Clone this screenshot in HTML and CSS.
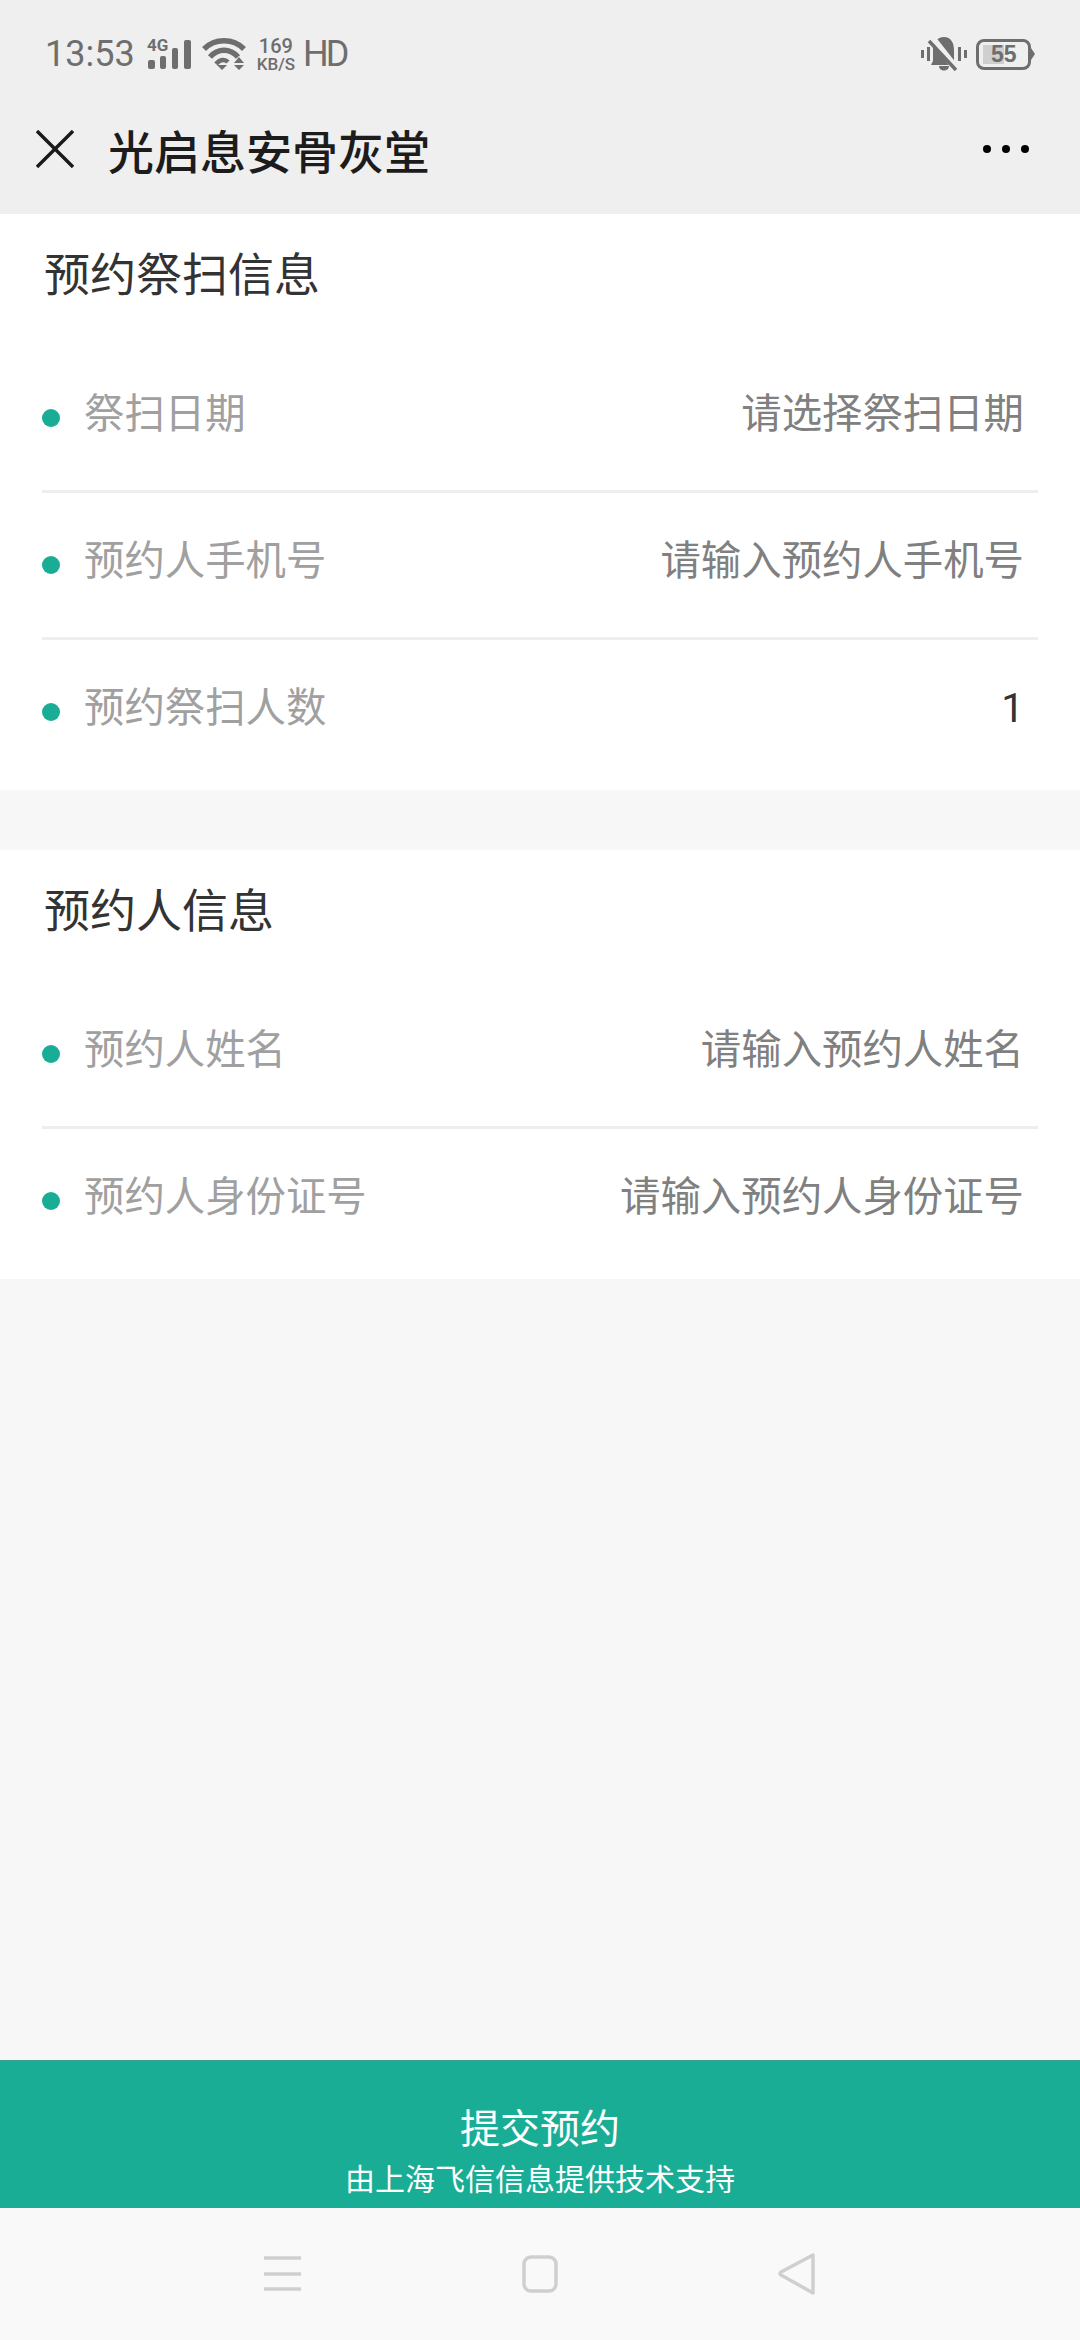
FILE: index.html
```html
<!DOCTYPE html>
<html lang="zh-CN">
<head>
    <meta charset="UTF-8">
    <meta name="viewport" content="width=device-width, initial-scale=1.0">
    <title>光启息安骨灰堂</title>
    <link rel="stylesheet" href="styles.css">
</head>
<body>
    <div class="page">
        <header class="top">
            <div class="status-bar">
                <div class="status-left">
                    <span class="clock">13:53</span>
                    <svg class="signal" width="44" height="30" viewBox="0 0 44 30">
                        <text x="0" y="12" class="signal-text">4G</text>
                        <rect x="1" y="21" width="7" height="9" rx="2"/>
                        <rect x="13" y="17" width="6" height="13" rx="2"/>
                        <rect x="25" y="9" width="6" height="21" rx="2"/>
                        <rect x="37" y="1" width="7" height="29" rx="2"/>
                    </svg>
                    <svg class="wifi" width="44" height="32" viewBox="0 0 44 32">
                        <path d="M2 11 C13 0 31 0 42 11" fill="none" stroke="#6e6e6e" stroke-width="5.5"/>
                        <path d="M8 19 C16 10 28 10 36 19" fill="none" stroke="#6e6e6e" stroke-width="5.5"/>
                        <path d="M14 26 C18 21 23 21 26 24" fill="none" stroke="#6e6e6e" stroke-width="4.5"/>
                        <path d="M15 27 H25 L20 32 Z M32 25 L37 19 L42 25 Z M32 27 H42 L37 32 Z" fill="#6e6e6e"/>
                    </svg>
                    <div class="speed"><span>169</span><span>KB/S</span></div>
                    <span class="hd">HD</span>
                </div>
                <div class="status-right">
                    <svg width="46" height="34" viewBox="0 0 46 34">
                        <rect x="0" y="13" width="3" height="8" fill="#6e6e6e"/>
                        <rect x="6" y="10" width="3" height="14" fill="#6e6e6e"/>
                        <rect x="37" y="10" width="3" height="14" fill="#6e6e6e"/>
                        <rect x="43" y="13" width="3" height="8" fill="#6e6e6e"/>
                        <path d="M23 0 C30 0 33 6 33 13 V24 L36 28 H10 L12 24 V13 C12 6 16 0 23 0 Z M18 29 H28 C28 35 18 35 18 29 Z" fill="#6e6e6e"/>
                        <path d="M11 1 L37 34" stroke="#efefef" stroke-width="7"/>
                        <path d="M8 4 L35 33" stroke="#6e6e6e" stroke-width="3.5"/>
                    </svg>
                    <div class="battery">
                        <div class="battery-fill"></div>
                        <span class="battery-num">55</span>
                    </div>
                    <div class="battery-cap"></div>
                </div>
            </div>
            <nav class="title-bar">
                <svg class="close" width="38" height="38" viewBox="0 0 38 38">
                    <path d="M1 1 L37 37 M37 1 L1 37" stroke="#1a1a1a" stroke-width="3.4" fill="none"/>
                </svg>
                <h1>光启息安骨灰堂</h1>
                <div class="more"><i></i><i></i><i></i></div>
            </nav>
        </header>

        <main class="content">
            <section class="card">
                <h2>预约祭扫信息</h2>
                <div class="row">
                    <span class="dot"></span>
                    <span class="label">祭扫日期</span>
                    <span class="value">请选择祭扫日期</span>
                </div>
                <div class="row">
                    <span class="dot"></span>
                    <span class="label">预约人手机号</span>
                    <span class="value">请输入预约人手机号</span>
                </div>
                <div class="row">
                    <span class="dot"></span>
                    <span class="label">预约祭扫人数</span>
                    <span class="value value-dark">1</span>
                </div>
            </section>

            <section class="card">
                <h2>预约人信息</h2>
                <div class="row">
                    <span class="dot"></span>
                    <span class="label">预约人姓名</span>
                    <span class="value">请输入预约人姓名</span>
                </div>
                <div class="row">
                    <span class="dot"></span>
                    <span class="label">预约人身份证号</span>
                    <span class="value">请输入预约人身份证号</span>
                </div>
            </section>
        </main>

        <button class="submit">
            <span class="submit-title">提交预约</span>
            <span class="submit-sub">由上海飞信信息提供技术支持</span>
        </button>

        <footer class="nav-bar">
            <svg width="38" height="36" viewBox="0 0 38 36">
                <path d="M0 2 H37 M0 18 H37 M0 33 H37" stroke="#cfcfcf" stroke-width="3.5" fill="none"/>
            </svg>
            <svg width="36" height="38" viewBox="0 0 36 38">
                <rect x="2" y="2" width="32" height="34" rx="7" stroke="#cfcfcf" stroke-width="3.5" fill="none"/>
            </svg>
            <svg width="38" height="42" viewBox="0 0 38 42">
                <path d="M35 2 V40 L3 22 Q1 21 3 19 Z" stroke="#cfcfcf" stroke-width="3.5" stroke-linejoin="round" fill="none"/>
            </svg>
        </footer>
    </div>
</body>
</html>
```

FILE: styles.css
```css
:root {
    --green: #1aad95;
    --bar: #efefef;
    --icon: #6e6e6e;
}

* {
    box-sizing: border-box;
    margin: 0;
    padding: 0;
}

body {
    font-family: "Noto Sans CJK SC", Roboto, sans-serif;
    background: #f7f7f7;
}

.page {
    width: 1080px;
    height: 2340px;
    display: flex;
    flex-direction: column;
    overflow: hidden;
}

.top {
    height: 214px;
    background: var(--bar);
    flex: none;
}

.status-bar {
    height: 108px;
    padding: 0 45px;
    display: flex;
    justify-content: space-between;
    align-items: center;
    color: var(--icon);
}

.status-left,
.status-right {
    display: flex;
    align-items: center;
}

.clock {
    font-family: Roboto, sans-serif;
    font-size: 36px;
    margin-right: 12px;
}

.signal {
    fill: var(--icon);
    margin-right: 11px;
    overflow: visible;
}

.signal-text {
    font-family: Roboto, sans-serif;
    font-size: 17px;
    font-weight: 700;
}

.wifi {
    margin-right: 11px;
}

.speed {
    display: flex;
    flex-direction: column;
    font-family: Roboto, sans-serif;
    font-weight: 500;
    font-size: 17px;
    line-height: 16px;
    margin-right: 8px;
}

.speed span:first-child {
    font-size: 20px;
    line-height: 19px;
    text-align: center;
}

.hd {
    font-family: Roboto, sans-serif;
    font-size: 36px;
    letter-spacing: -3px;
}

.status-right svg {
    margin-right: 9px;
}

.battery {
    position: relative;
    width: 55px;
    height: 31px;
    border: 3px solid var(--icon);
    border-radius: 8px;
    padding: 3px 4px;
}

.battery-fill {
    width: 21px;
    height: 100%;
    background: #cfcfcf;
}

.battery-num {
    position: absolute;
    left: 12px;
    top: 0;
    font-family: "Liberation Sans", sans-serif;
    font-weight: 700;
    font-size: 23px;
    line-height: 25px;
    color: var(--icon);
}

.battery-cap {
    width: 4px;
    height: 12px;
    background: var(--icon);
    clip-path: polygon(0 0, 100% 50%, 0 100%);
}

.title-bar {
    height: 106px;
    padding: 0 51px 24px 36px;
    display: flex;
    align-items: center;
}

.close {
    margin-right: 34px;
}

h1 {
    flex: 1;
    font-size: 46px;
    font-weight: 500;
    color: #1c1c1c;
    line-height: 60px;
}

.more {
    display: flex;
    gap: 11px;
}

.more i {
    width: 8px;
    height: 8px;
    border-radius: 50%;
    background: #000;
}

.content {
    flex: 1;
    display: flex;
    flex-direction: column;
    gap: 60px;
}

.card {
    background: #fff;
    padding: 27px 42px 3px;
}

h2 {
    font-size: 46px;
    font-weight: 400;
    line-height: 60px;
    color: #333;
    margin-bottom: 45px;
    padding-left: 2px;
}

.row {
    height: 147px;
    display: flex;
    align-items: center;
    border-bottom: 3px solid #eee;
    padding: 0 14px 0 0;
}

.row:last-child {
    border-bottom: 3px solid #fff;
}

.dot {
    width: 18px;
    height: 18px;
    border-radius: 50%;
    background: var(--green);
    margin-right: 24px;
}

.label,
.value {
    font-size: 40.4px;
    line-height: 56px;
    position: relative;
    top: -7px;
}

.label {
    flex: 1;
    color: #a0a0a0;
}

.value {
    color: #808080;
}

.value-dark {
    color: #333;
    font-family: Roboto, sans-serif;
    top: -3px;
}

.submit {
    flex: none;
    height: 148px;
    border: none;
    border-top: 2px solid #3b9f8f;
    background: var(--green);
    color: #fff;
    font-family: inherit;
    display: flex;
    flex-direction: column;
    align-items: center;
    padding-top: 36px;
}

.submit-title {
    font-size: 40px;
    line-height: 56px;
    margin-bottom: 3px;
}

.submit-sub {
    font-size: 30px;
    line-height: 40px;
}

.nav-bar {
    flex: none;
    height: 132px;
    background: #f9f9f9;
    display: flex;
    align-items: center;
    justify-content: space-between;
    padding: 0 264px;
}
```
